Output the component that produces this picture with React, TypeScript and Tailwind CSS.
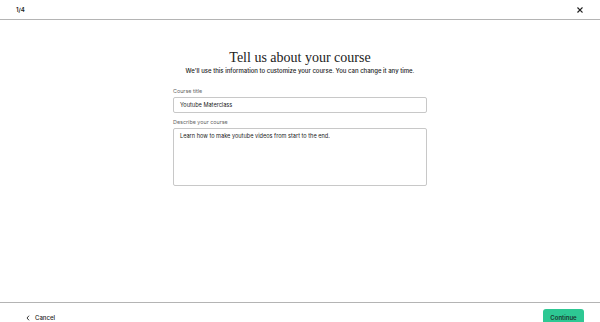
import React from "react";

export default function App() {
  return (
    <div className="w-[600px] h-[322px] bg-white flex flex-col overflow-hidden" style={{ fontFamily: "Inter, 'Liberation Sans', Arial, sans-serif" }}>
      <div className="h-[20px] shrink-0 flex items-center justify-between pl-[16px] pr-[16px] border-b border-[#b4b4b4]">
        <span className="text-[6px] font-semibold text-[#222]">1/4</span>
        <svg width="6" height="6" viewBox="0 0 10 10" className="mr-[1px]">
          <path d="M1.5 1.5 L8.5 8.5 M8.5 1.5 L1.5 8.5" stroke="#222" strokeWidth="2" strokeLinecap="square" />
        </svg>
      </div>
      <div className="flex-1 flex flex-col items-center pt-[29px]">
        <h1 className="text-[14px] leading-[18px] text-[#222]" style={{ fontFamily: "'Liberation Serif', 'Times New Roman', serif" }}>Tell us about your course</h1>
        <p className="mt-[-1px] text-[6px] font-medium text-[#222]">We'll use this information to customize your course. You can change it any time.</p>
        <div className="w-[254px] mt-[12px] flex flex-col">
          <label className="text-[5.4px] text-[#666] leading-[8px]">Course title</label>
          <div className="mt-[2px] h-[16px] border border-[#c8c8c8] rounded-[2px] flex items-center px-[6px] text-[5.6px] text-[#222]">Youtube Materclass</div>
          <label className="mt-[5px] text-[5.4px] text-[#666] leading-[8px]">Describe your course</label>
          <div className="mt-[2px] h-[58px] border border-[#c8c8c8] rounded-[2px] px-[6px] pt-[3px] text-[5.6px] text-[#222]">Learn how to make youtube videos from start to the end.</div>
        </div>
      </div>
      <div className="h-[20px] shrink-0 border-t border-[#b4b4b4] flex items-start justify-between pl-[26px] pr-[16px]">
        <div className="flex items-center gap-[5px] mt-[11px]">
          <svg width="4" height="6" viewBox="0 0 4 6">
            <path d="M3 0.7 L1 3 L3 5.3" stroke="#222" strokeWidth="0.9" fill="none" />
          </svg>
          <span className="text-[6px] leading-[8px] font-medium text-[#222]">Cancel</span>
        </div>
        <div className="mt-[6px] h-[20px] w-[41px] bg-[#2dc893] rounded-[3px] flex justify-center pt-[5px]">
          <span className="text-[6px] leading-[8px] font-semibold text-[#1a3a2e]">Continue</span>
        </div>
      </div>
    </div>
  );
}
